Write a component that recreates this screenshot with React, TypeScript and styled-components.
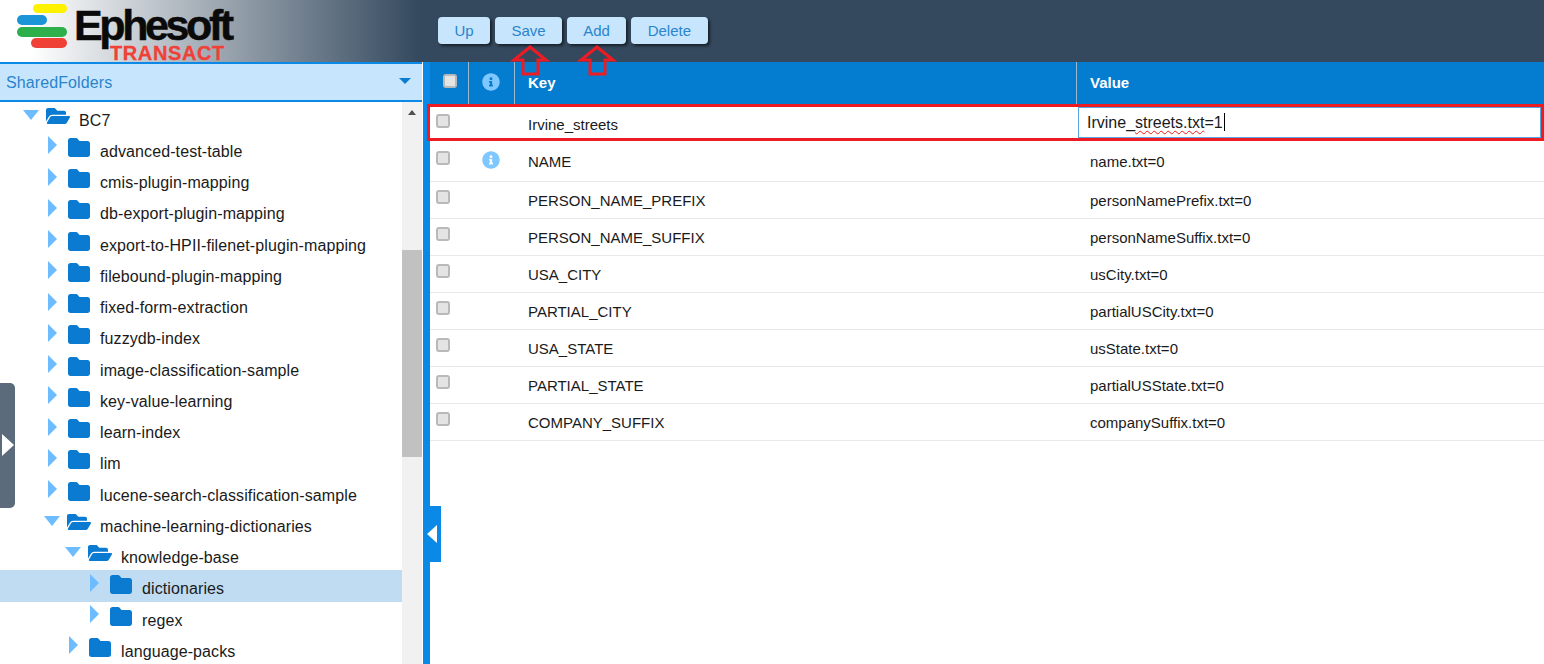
import React from "react";
import styled, { createGlobalStyle } from "styled-components";
import { FaFolderOpen, FaInfoCircle } from "react-icons/fa";

const GlobalStyle = createGlobalStyle`
    html, body {
        margin: 0;
        padding: 0;
        height: 100%;
        overflow: hidden;
        background: #fff;
        font-family: "Liberation Sans", Arial, sans-serif;
    }
`;

const Page = styled.div`
    position: relative;
    width: 1544px;
    height: 664px;
    display: flex;
    flex-direction: column;
    overflow: hidden;
`;

const Header = styled.header`
    flex: 0 0 62px;
    display: flex;
    align-items: flex-start;
    background: linear-gradient(90deg, #fff 30px, #34495e 420px);
`;

const Logo = styled.div`
    flex: 0 0 438px;
    display: flex;
    gap: 7px;
    padding: 4px 0 0 17px;
    box-sizing: border-box;
`;

const LogoText = styled.div`
    display: flex;
    flex-direction: column;
`;

const LogoName = styled.span`
    margin-top: 1px;
    font-size: 43px;
    line-height: 40px;
    font-weight: 700;
    letter-spacing: -3.4px;
    color: #0a0a0a;
    -webkit-text-stroke: 0.5px #0a0a0a;
`;

const LogoProduct = styled.span`
    margin: 0 0 0 36px;
    font-size: 20px;
    line-height: 16px;
    font-weight: 700;
    letter-spacing: 0.6px;
    color: #ef4136;
    -webkit-text-stroke: 0.3px #ef4136;
`;

const Toolbar = styled.div`
    display: flex;
    gap: 4.7px;
    padding-top: 17px;
`;

const ToolButton = styled.button`
    height: 27px;
    padding: 0 16.5px;
    border: 0;
    border-radius: 4px;
    background: #c7e6fd;
    box-shadow: 2px 2px 3px rgba(0, 0, 0, 0.55);
    color: #2a84cc;
    font: 15px "Liberation Sans", Arial, sans-serif;
`;

const Body = styled.div`
    flex: 1;
    min-height: 0;
    display: flex;
`;

const Sidebar = styled.aside`
    flex: 0 0 423px;
    display: flex;
    flex-direction: column;
    min-height: 0;
`;

const FolderSelect = styled.div`
    flex: 0 0 40px;
    box-sizing: border-box;
    margin-right: 1px;
    padding: 2px 11px 0 6px;
    display: flex;
    align-items: center;
    justify-content: space-between;
    background: #c7e6fd;
    border-top: 2px solid #0a8ae6;
    border-bottom: 2px solid #0a8ae6;
    color: #2a84cc;
    font-size: 16px;
    letter-spacing: 0.1px;
`;

const SelectCaret = styled.span`
    width: 0;
    height: 0;
    margin-top: -4px;
    border-left: 6px solid transparent;
    border-right: 6px solid transparent;
    border-top: 6px solid #0b7dd1;
`;

const TreeArea = styled.div`
    flex: 1;
    min-height: 0;
    display: flex;
`;

const Tree = styled.ul`
    flex: 0 0 402px;
    margin: -0.5px 0 0;
    padding: 0;
    list-style: none;
    overflow: hidden;
`;

const TreeRow = styled.li<{ $level: number; $selected?: boolean }>`
    height: 31.25px;
    box-sizing: border-box;
    padding-left: ${(p) => 1 + p.$level * 21}px;
    display: flex;
    align-items: center;
    background: ${(p) => (p.$selected ? "#bfdcf2" : "transparent")};
    color: #1a1a1a;
    font-size: 16px;
    letter-spacing: 0.1px;
`;

const ArrowSlot = styled.span`
    flex: 0 0 19px;
    display: flex;
    justify-content: center;
    margin-right: 6px;
    margin-top: -6px;
`;

const ArrowClosed = styled.span`
    width: 0;
    height: 0;
    border-top: 9.5px solid transparent;
    border-bottom: 9.5px solid transparent;
    border-left: 9px solid #6dbcff;
`;

const ArrowOpen = styled.span`
    width: 0;
    height: 0;
    margin: 1px 0 0 -2px;
    border-left: 8.5px solid transparent;
    border-right: 8.5px solid transparent;
    border-top: 10px solid #6dbcff;
`;

const FolderSlot = styled.span`
    flex: 0 0 32px;
    display: flex;
    margin-top: -2px;
    color: #0a7bd0;
    font-size: 24px;
`;

const FolderOpenWrap = styled.span`
    display: flex;
    margin: -1px 0 0 -1px;
`;

const TreeLabel = styled.span`
    padding-top: 7px;
    white-space: nowrap;
`;

const ScrollTrack = styled.div`
    flex: 0 0 20px;
    display: flex;
    flex-direction: column;
    align-items: center;
    background: #f1f1f1;
`;

const ScrollUp = styled.span`
    width: 0;
    height: 0;
    margin-top: 8px;
    border-left: 4.5px solid transparent;
    border-right: 4.5px solid transparent;
    border-bottom: 5px solid #505050;
`;

const ScrollThumb = styled.div`
    align-self: stretch;
    height: 207px;
    margin-top: 135px;
    background: #c1c1c1;
`;

const Splitter = styled.div`
    flex: 0 0 7px;
    background: #0a8ae6;
`;

const TablePanel = styled.main`
    flex: 1;
    min-width: 0;
`;

const columns = "38px 46px 562px 1fr";

const Row = styled.div<{ $height: number; $inset: number }>`
    --inset: ${(p) => p.$inset}px;

    display: grid;
    grid-template-columns: ${columns};
    height: ${(p) => p.$height}px;
    box-sizing: border-box;
    border-bottom: 1px solid #e8e8e8;
    color: #1a1a1a;
    font-size: 15px;
`;

const HeadRow = styled.div`
    display: grid;
    grid-template-columns: ${columns};
    height: 42px;
    background: #047cd0;
    color: #fff;
    font-size: 15px;
    font-weight: 700;
`;

const HeadCell = styled.div<{ $divider?: boolean }>`
    box-sizing: border-box;
    padding: 11px 0 0 ${(p) => (p.$divider ? 13 : 14)}px;
    line-height: 20px;
    border-left: ${(p) => (p.$divider ? "1px solid #9db9cf" : "0")};
`;

const Cell = styled.div`
    padding: calc(var(--inset) + 2px) 0 0 14px;
    line-height: 18px;
`;

const CheckCell = styled.div`
    padding: var(--inset) 0 0 6px;
`;

const InfoCell = styled.div`
    padding: var(--inset) 0 0 14px;
    color: #7fc8ff;
    font-size: 18px;
    line-height: 18px;
`;

const HeadInfo = styled.span`
    color: #7fc8ff;
    font-size: 18px;
    line-height: 18px;
`;

const Check = styled.span<{ $head?: boolean }>`
    display: block;
    box-sizing: border-box;
    width: 14px;
    height: 14px;
    margin-top: ${(p) => (p.$head ? 1 : 0)}px;
    margin-left: ${(p) => (p.$head ? -1 : 0)}px;
    border: 2px solid #b9b9b9;
    border-radius: 3px;
    background: #e4e4e4;
`;

const ValueEditor = styled.div`
    height: 31px;
    margin: 3px 3px 0 2px;
    padding-left: 8px;
    box-sizing: border-box;
    border: 1px solid #5aa5e0;
    background: #fff;
    font-size: 16px;
    line-height: 29px;
    color: #1a1a1a;
`;

const Misspelt = styled.span`
    text-decoration: underline wavy #f01a10 1.3px;
    text-underline-offset: 2px;
`;

const Caret = styled.span`
    display: inline-block;
    width: 1px;
    height: 18px;
    margin-left: 1px;
    vertical-align: -3px;
    background: #000;
`;

const ExpandHandle = styled.div`
    position: absolute;
    left: 0;
    top: 383px;
    width: 15px;
    height: 125px;
    display: flex;
    align-items: center;
    padding: 0 0 2px 2px;
    box-sizing: border-box;
    border-radius: 0 5px 5px 0;
    background: #5b6b7b;
`;

const HandleRight = styled.span`
    width: 0;
    height: 0;
    border-top: 11px solid transparent;
    border-bottom: 11px solid transparent;
    border-left: 12px solid #fff;
`;

const CollapseHandle = styled.div`
    position: absolute;
    left: 423px;
    top: 506px;
    width: 18px;
    height: 56px;
    display: flex;
    align-items: center;
    padding-left: 4px;
    box-sizing: border-box;
    background: #0a8ae6;
`;

const HandleLeft = styled.span`
    width: 0;
    height: 0;
    border-top: 9px solid transparent;
    border-bottom: 9px solid transparent;
    border-right: 10px solid #fff;
`;

const Highlight = styled.div`
    position: absolute;
    left: 427px;
    top: 104px;
    width: 1117px;
    height: 37px;
    box-sizing: border-box;
    border: 3px solid #ed1c24;
    pointer-events: none;
`;

const ArrowMark = styled.svg<{ $left: number }>`
    position: absolute;
    left: ${(p) => p.$left}px;
    top: 44px;
`;

type Folder = { name: string; level: number; open?: boolean; selected?: boolean };

const folders: Folder[] = [
    { name: "BC7", level: 1, open: true },
    { name: "advanced-test-table", level: 2 },
    { name: "cmis-plugin-mapping", level: 2 },
    { name: "db-export-plugin-mapping", level: 2 },
    { name: "export-to-HPII-filenet-plugin-mapping", level: 2 },
    { name: "filebound-plugin-mapping", level: 2 },
    { name: "fixed-form-extraction", level: 2 },
    { name: "fuzzydb-index", level: 2 },
    { name: "image-classification-sample", level: 2 },
    { name: "key-value-learning", level: 2 },
    { name: "learn-index", level: 2 },
    { name: "lim", level: 2 },
    { name: "lucene-search-classification-sample", level: 2 },
    { name: "machine-learning-dictionaries", level: 2, open: true },
    { name: "knowledge-base", level: 3, open: true },
    { name: "dictionaries", level: 4, selected: true },
    { name: "regex", level: 4 },
    { name: "language-packs", level: 3 },
];

const entries = [
    ["NAME", "name.txt=0"],
    ["PERSON_NAME_PREFIX", "personNamePrefix.txt=0"],
    ["PERSON_NAME_SUFFIX", "personNameSuffix.txt=0"],
    ["USA_CITY", "usCity.txt=0"],
    ["PARTIAL_CITY", "partialUSCity.txt=0"],
    ["USA_STATE", "usState.txt=0"],
    ["PARTIAL_STATE", "partialUSState.txt=0"],
    ["COMPANY_SUFFIX", "companySuffix.txt=0"],
];

function LogoMark(): React.ReactElement {
    return (
        <svg width="50" height="46" viewBox="0 0 50 46">
            <rect x="16" y="0" width="34" height="9" rx="4.5" fill="#fff200" />
            <rect x="0" y="11" width="30" height="10" rx="5" fill="#1b95d8" />
            <rect x="0" y="23" width="50" height="10" rx="5" fill="#2db04b" />
            <rect x="14" y="34" width="36" height="10" rx="5" fill="#ef4136" />
        </svg>
    );
}

function FolderClosed(): React.ReactElement {
    return (
        <svg width="22" height="19" viewBox="0 0 22 19" fill="currentColor">
            <path d="M2.5 0h5.6c.6 0 1.1.3 1.5.7L11.5 3h8c1.4 0 2.5 1.1 2.5 2.5v11c0 1.4-1.1 2.5-2.5 2.5h-17C1.1 19 0 17.900 0 16.500v-14C0 1.100 1.100 0 2.500 0z" />
        </svg>
    );
}

function UpMark({ left }: { left: number }): React.ReactElement {
    return (
        <ArrowMark $left={left} width="40" height="33" viewBox="0 0 40 33">
            <path d="M20 3 L36 16 H28 V30 H13 V16 H4 Z" fill="none" stroke="#ed1c24" strokeWidth="3" />
        </ArrowMark>
    );
}

export default function App(): React.ReactElement {
    return (
        <Page>
            <GlobalStyle />
            <Header>
                <Logo>
                    <LogoMark />
                    <LogoText>
                        <LogoName>Ephesoft</LogoName>
                        <LogoProduct>TRANSACT</LogoProduct>
                    </LogoText>
                </Logo>
                <Toolbar>
                    <ToolButton>Up</ToolButton>
                    <ToolButton>Save</ToolButton>
                    <ToolButton>Add</ToolButton>
                    <ToolButton>Delete</ToolButton>
                </Toolbar>
            </Header>
            <Body>
                <Sidebar>
                    <FolderSelect>
                        SharedFolders
                        <SelectCaret />
                    </FolderSelect>
                    <TreeArea>
                        <Tree>
                            {folders.map((f) => (
                                <TreeRow key={f.name} $level={f.level} $selected={f.selected}>
                                    <ArrowSlot>{f.open ? <ArrowOpen /> : <ArrowClosed />}</ArrowSlot>
                                    <FolderSlot>
                                        {f.open ? <FolderOpenWrap><FaFolderOpen /></FolderOpenWrap> : <FolderClosed />}
                                    </FolderSlot>
                                    <TreeLabel>{f.name}</TreeLabel>
                                </TreeRow>
                            ))}
                        </Tree>
                        <ScrollTrack>
                            <ScrollUp />
                            <ScrollThumb />
                        </ScrollTrack>
                    </TreeArea>
                </Sidebar>
                <Splitter />
                <TablePanel>
                    <HeadRow>
                        <HeadCell><Check $head /></HeadCell>
                        <HeadCell $divider><HeadInfo><FaInfoCircle /></HeadInfo></HeadCell>
                        <HeadCell $divider>Key</HeadCell>
                        <HeadCell $divider>Value</HeadCell>
                    </HeadRow>
                    <Row $height={37} $inset={10}>
                        <CheckCell><Check /></CheckCell>
                        <InfoCell />
                        <Cell>Irvine_streets</Cell>
                        <ValueEditor>
                            Irvine_<Misspelt>streets.txt</Misspelt>=1<Caret />
                        </ValueEditor>
                    </Row>
                    {entries.map(([key, value], i) => (
                        <Row key={key} $height={i === 0 ? 41 : 37} $inset={i === 0 ? 10 : 8}>
                            <CheckCell><Check /></CheckCell>
                            <InfoCell>{i === 0 && <FaInfoCircle />}</InfoCell>
                            <Cell>{key}</Cell>
                            <Cell>{value}</Cell>
                        </Row>
                    ))}
                </TablePanel>
            </Body>
            <ExpandHandle><HandleRight /></ExpandHandle>
            <CollapseHandle><HandleLeft /></CollapseHandle>
            <Highlight />
            <UpMark left={510} />
            <UpMark left={577} />
        </Page>
    );
}
